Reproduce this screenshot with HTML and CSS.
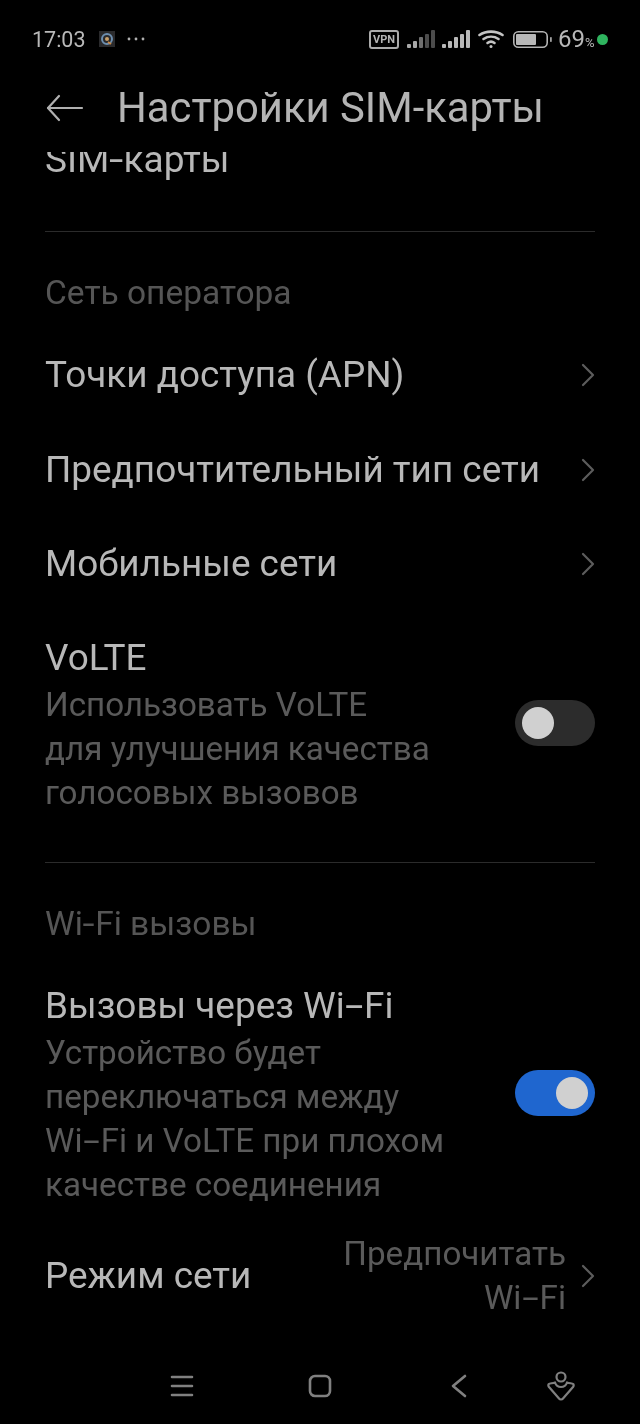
FILE: index.html
```html
<!DOCTYPE html>
<html lang="ru">
<head>
<meta charset="utf-8">
<title>Настройки SIM-карты</title>
<link rel="stylesheet" href="styles.css">
</head>
<body>
<div class="phone">
  <div class="status">
    <div class="status-left">
      <span class="time">17:03</span>
      <svg class="app-icon" width="16" height="16" viewBox="0 0 16 16"><rect width="16" height="16" fill="#2a2a2c"/><circle cx="8" cy="8" r="5" fill="none" stroke="#6d8fb0" stroke-width="2"/><circle cx="8" cy="8" r="2" fill="#c9a06a"/><path d="M9 11l3 2" stroke="#c98a4a" stroke-width="2"/></svg>
      <svg class="dots" width="18" height="4" viewBox="0 0 18 4"><circle cx="2" cy="2" r="1.4"/><circle cx="9" cy="2" r="1.4"/><circle cx="16" cy="2" r="1.4"/></svg>
    </div>
    <div class="status-right">
      <span class="vpn">VPN</span>
      <svg class="sig-a" width="28" height="18" viewBox="0 0 28 18"><rect x="0" y="14" width="4" height="4" rx="1" fill="#a8a8a8"/><rect x="6" y="11" width="4" height="7" rx="1" fill="#a8a8a8"/><rect x="12" y="7" width="4" height="11" rx="1" fill="#707070"/><rect x="18" y="4" width="4" height="14" rx="1" fill="#4c4c4c"/><rect x="24" y="0" width="4" height="18" rx="1" fill="#4c4c4c"/></svg>
      <svg class="sig-b" width="28" height="18" viewBox="0 0 28 18" fill="#b8b8b8"><rect x="0" y="14" width="4" height="4" rx="1"/><rect x="6" y="11" width="4" height="7" rx="1"/><rect x="12" y="7" width="4" height="11" rx="1"/><rect x="18" y="4" width="4" height="14" rx="1"/><rect x="24" y="0" width="4" height="18" rx="1"/></svg>
      <svg class="wifi" width="26" height="18" viewBox="0 0 26 18" fill="none" stroke="#c4c4c4" stroke-width="2.6" stroke-linecap="round"><path d="M1.500 5C8 .5 18 .5 24.500 5"/><path d="M5.500 9C10 6 16 6 20.500 9"/><path d="M9.500 13C11.500 11.500 14.500 11.500 16.500 13"/><circle cx="13" cy="16.500" r="1.500" fill="#c4c4c4" stroke="none"/></svg>
      <svg class="battery" width="39" height="17" viewBox="0 0 39 17"><rect x=".8" y=".8" width="33.400" height="15.400" rx="4.500" fill="none" stroke="#b4b4b4" stroke-width="1.600"/><rect x="3" y="3" width="20" height="11" rx="1" fill="#b8b8b8"/><rect x="37" y="6" width="1.800" height="5" rx=".8" fill="#a0a0a0"/></svg>
      <span class="pct">69<small>%</small></span>
      <span class="dot"></span>
    </div>
  </div>

  <header class="header">
    <svg class="back" width="38" height="28" viewBox="0 0 38 28" fill="none" stroke="#b0b0b0" stroke-width="2.200" stroke-linecap="round" stroke-linejoin="round"><path d="M36 14H2"/><path d="M13 2L2 14l11 12"/></svg>
    <h1 class="title">Настройки SIM-карты</h1>
  </header>

  <main class="scroller">
    <div class="clipped">SIM<span class="hy-m">-</span>карты</div>
    <hr class="rule rule-first">
    <h2 class="section">Сеть оператора</h2>
    <div class="row"><span class="label">Точки доступа (APN)</span><svg class="chev" width="14" height="24" viewBox="0 0 14 24"><path d="M2 2l10 10L2 22"/></svg></div>
    <div class="row"><span class="label">Предпочтительный тип сети</span><svg class="chev" width="14" height="24" viewBox="0 0 14 24"><path d="M2 2l10 10L2 22"/></svg></div>
    <div class="row"><span class="label">Мобильные сети</span><svg class="chev" width="14" height="24" viewBox="0 0 14 24"><path d="M2 2l10 10L2 22"/></svg></div>
    <div class="toggle-row volte">
      <div class="toggle-text">
        <div class="label">VoLTE</div>
        <div class="desc">Использовать VoLTE<br>для улучшения качества<br>голосовых вызовов</div>
      </div>
      <span class="switch"><span class="knob"></span></span>
    </div>
    <hr class="rule rule-second">
    <h2 class="section">Wi<span class="hy-s">-</span>Fi вызовы</h2>
    <div class="toggle-row wifi-calls">
      <div class="toggle-text">
        <div class="label">Вызовы через Wi<span class="hy">-</span>Fi</div>
        <div class="desc">Устройство будет<br>переключаться между<br>Wi<span class="hy">-</span>Fi и VoLTE при плохом<br>качестве соединения</div>
      </div>
      <span class="switch on"><span class="knob"></span></span>
    </div>
    <div class="row mode">
      <span class="label">Режим сети</span>
      <span class="mode-right"><span class="desc mode-value">Предпочитать<br>Wi<span class="hy">-</span>Fi</span><svg class="chev" width="14" height="24" viewBox="0 0 14 24"><path d="M2 2l10 10L2 22"/></svg></span>
    </div>
  </main>

  <nav class="nav">
    <svg class="n-menu" width="24" height="22" viewBox="0 0 24 22" fill="none" stroke="#808080" stroke-width="2.600" stroke-linecap="round"><path d="M2 2h20M2 11h20M2 20h20"/></svg>
    <svg class="n-home" width="24" height="24" viewBox="0 0 24 24" fill="none" stroke="#808080" stroke-width="2.600"><rect x="2" y="2" width="20" height="20" rx="5"/></svg>
    <svg class="n-back" width="16" height="24" viewBox="0 0 16 24" fill="none" stroke="#808080" stroke-width="2.600" stroke-linecap="round" stroke-linejoin="round"><path d="M14 2L2 12l12 10"/></svg>
    <svg class="n-user" width="28" height="30" viewBox="0 0 28 30" fill="none" stroke="#808080" stroke-width="2.200" stroke-linecap="round" stroke-linejoin="round"><circle cx="14" cy="6" r="4.500"/><path d="M8 11.500C5 12.500 3 12 1.800 13 1 14 1.300 15 2 16l10 11.500c1 1.300 3 1.300 4 0L26 16c.7-1 1-2 .2-3-1.200-1-3.200-.5-6.200-1.500-1 3-3.500 4.500-6 4.500s-5-1.500-6-4.500z"/></svg>
  </nav>
</div>
</body>
</html>
```
FILE: styles.css
```css
* { box-sizing: border-box; }
html, body { margin: 0; padding: 0; background: #000; }
body { font-family: Roboto, "Noto Sans", sans-serif; color: #b4b4b4; }
.phone { width: 640px; height: 1424px; display: flex; flex-direction: column; overflow: hidden; }

.status { height: 71px; padding: 25px 32px 0; display: flex; justify-content: space-between; align-items: flex-start; flex: none; will-change: transform; }
.status-left, .status-right { height: 28px; display: flex; align-items: center; }
.time { font-size: 21.500px; color: #b8b8b8; width: 67px; }
.dots { fill: #b0b0b0; margin-left: 12px; }
.vpn { border: 2px solid #ababab; border-radius: 3px; width: 30px; height: 19px; font-size: 11px; font-weight: 700; color: #b4b4b4; display: flex; align-items: center; justify-content: center; }
.sig-a { margin-left: 8px; }
.sig-b { margin-left: 7px; }
.wifi { margin-left: 8px; }
.battery { margin-left: 9px; }
.pct { font-size: 24px; color: #b8b8b8; margin-left: 6px; width: 37px; white-space: nowrap; }
.pct small { font-size: 13px; }
.dot { width: 11px; height: 11px; border-radius: 50%; background: #2fb45f; margin-left: 2px; }

.header { height: 81px; padding: 0 46px 8px; display: flex; align-items: center; gap: 33px; flex: none; will-change: transform; }
.title { margin: 0; font-size: 41.800px; font-weight: 400; color: #b4b4b4; white-space: nowrap; }

.scroller { flex: 1; min-height: 0; overflow: hidden; padding: 0 45px; will-change: transform; }
.clipped { font-size: 37px; line-height: 48px; height: 48px; margin-top: -16px; color: #b8b8b8; }
.hy, .hy-m, .hy-s { display: inline-block; }
.hy { margin: 0 4.500px; transform: scaleX(1.8); }
.hy-m { margin: 0 2px; transform: scaleX(1.4); }
.hy-s { margin: 0 1.500px; transform: scaleX(1.3); }
.rule { border: 0; height: 1px; background: #2b2b2b; margin: 0; }
.rule-first { margin-top: 47px; }
.section { margin: 0; font-size: 33.500px; font-weight: 400; color: #555; line-height: 40px; padding: 41px 0 15px; }
.row { display: flex; align-items: center; justify-content: space-between; height: 94.500px; }
.label { font-size: 36.900px; line-height: 48px; color: #b8b8b8; }
.desc { font-size: 33.200px; line-height: 44px; color: #5a5a5a; }
.toggle-text .desc { margin-top: 1px; }
.chev { fill: none; stroke: #5c5c5c; stroke-width: 2.200; stroke-linecap: round; stroke-linejoin: round; }

.toggle-row { display: flex; align-items: center; justify-content: space-between; }
.switch { width: 80px; height: 46px; border-radius: 23px; background: #2c2c2c; display: flex; align-items: center; padding: 0 7px; flex: none; margin-top: -2px; }
.switch.on { background: #1f66cf; justify-content: flex-end; }
.knob { width: 32px; height: 32px; border-radius: 50%; background: #d0d0d0; }
.volte { padding-top: 22px; }
.rule-second { margin-top: 47px; }
.wifi-calls { padding-top: 23px; }
.mode { height: 114px; margin-top: 12px; }
.mode-right { display: flex; align-items: center; gap: 15px; text-align: right; }

.nav { height: 88px; flex: none; display: flex; align-items: center; padding: 12px 0 0 170px; }
.n-home { margin-left: 114px; }
.n-back { margin-left: 119px; }
.n-user { margin-left: 80px; }
```
